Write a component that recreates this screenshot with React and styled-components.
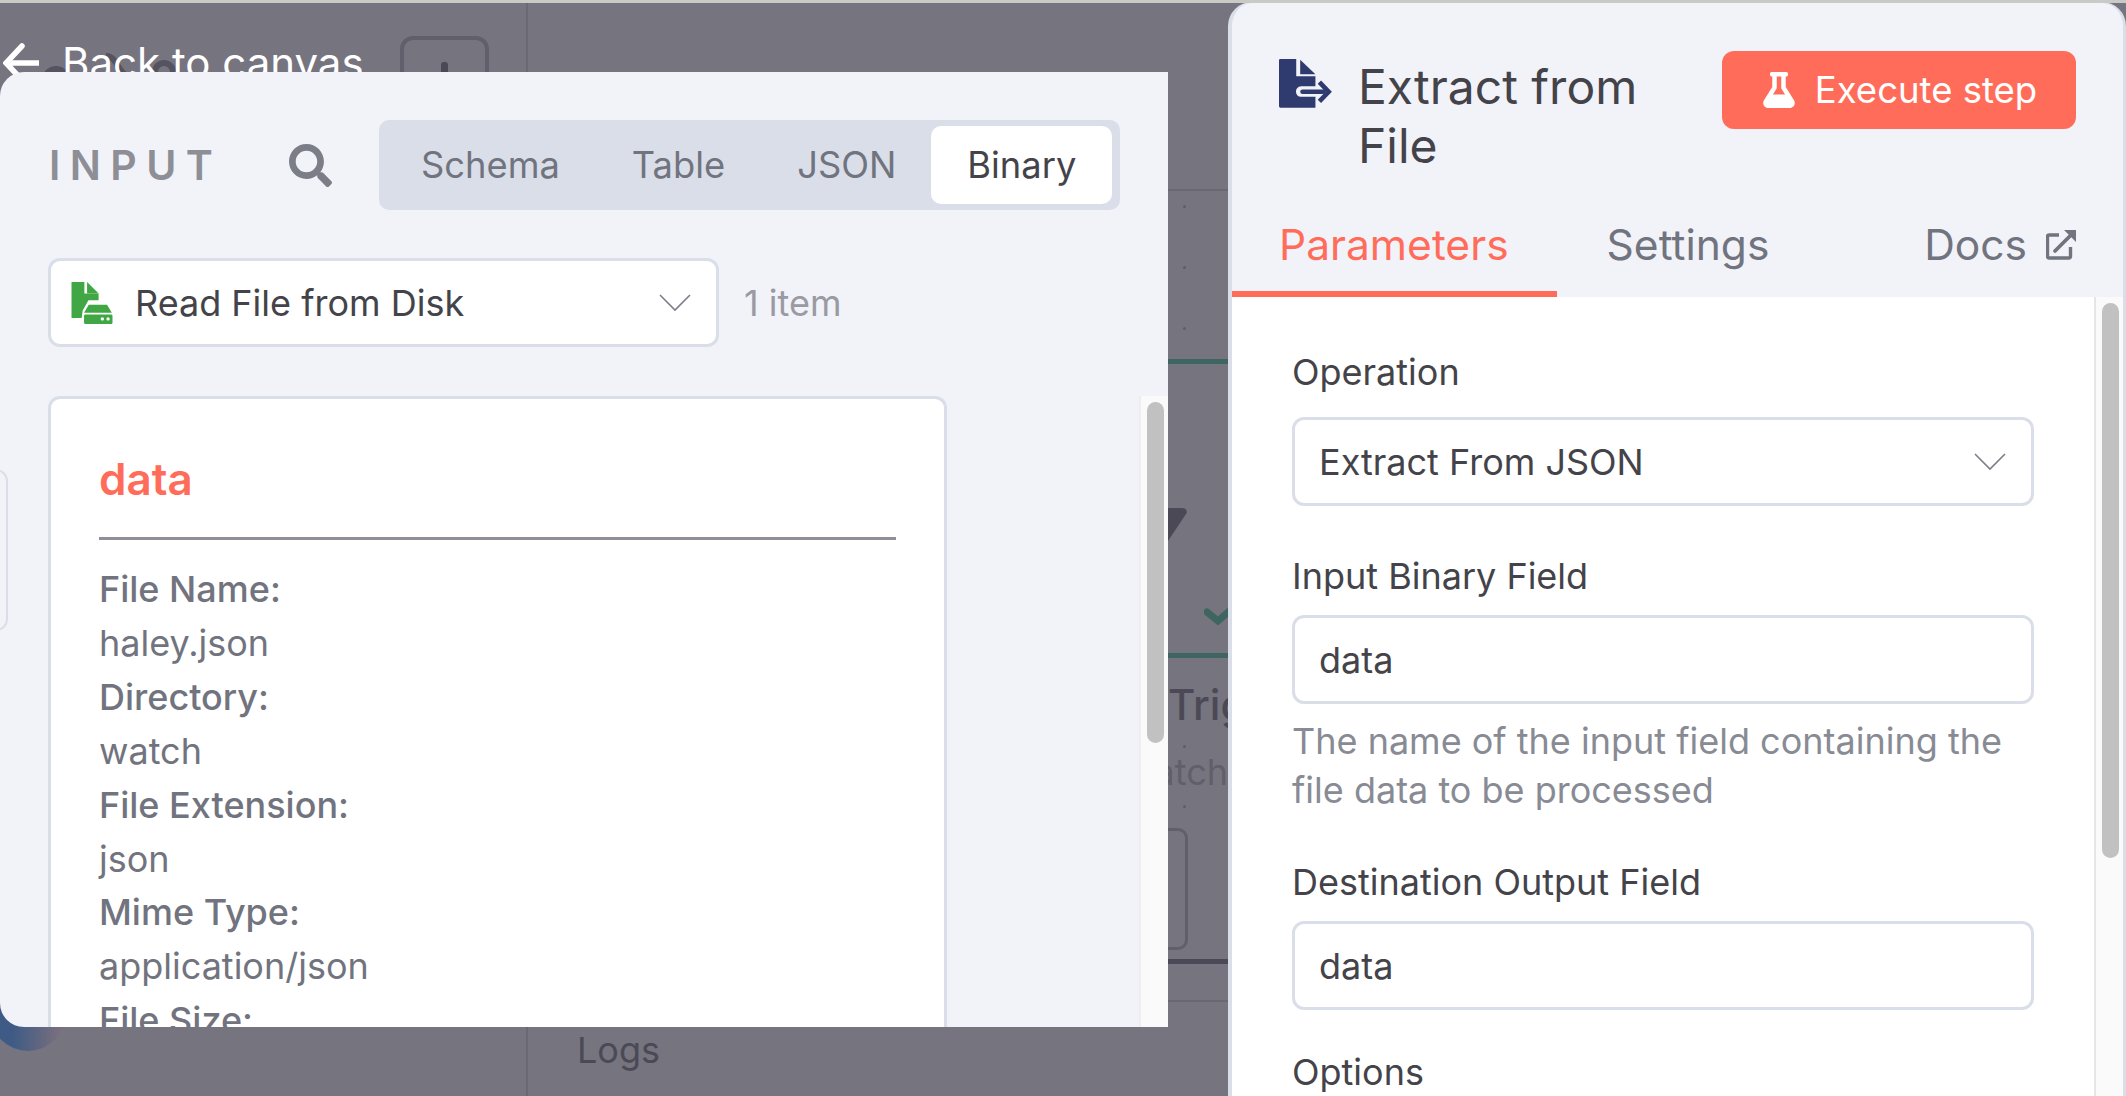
import React from 'react';
import styled, { createGlobalStyle } from 'styled-components';
import { FaSearch, FaFlask } from 'react-icons/fa';

const COLORS = {
  backdrop: '#76747f',
  panel: '#f1f3f9',
  border: '#dadee9',
  coral: '#ff6d5a',
  text: '#434349',
  muted: '#71747e',
  light: '#9a9aa3',
  hint: '#888b94',
  canvasDark: '#4b4955',
  canvasLine: '#6a6873',
  green: '#3f6561',
};

const GlobalStyle = createGlobalStyle`
  html, body {
    margin: 0;
    padding: 0;
    background: ${COLORS.backdrop};
  }
  * {
    box-sizing: border-box;
  }
`;

const Page = styled.div`
  position: relative;
  width: 2126px;
  height: 1096px;
  overflow: hidden;
  display: flex;
  align-items: flex-start;
  background: ${COLORS.backdrop};
  font-family: Inter, "Liberation Sans", sans-serif;
  color: ${COLORS.text};
`;

/* the dimmed canvas behind the two panels */
const Canvas = styled.div`
  position: absolute;
  inset: 0;
`;

const TopEdge = styled.div`
  position: absolute;
  top: 0;
  left: 0;
  right: 0;
  height: 3px;
  z-index: 2;
  background: #c9cac6;
`;

const VLine = styled.div`
  position: absolute;
  left: 526px;
  top: 0;
  bottom: 0;
  width: 2px;
  background: ${COLORS.canvasLine};
`;

const HLine = styled.div`
  position: absolute;
  left: ${p => p.$left || 527}px;
  right: 898px;
  top: ${p => p.$top}px;
  height: ${p => p.$h || 2}px;
  background: ${p => p.$color || COLORS.canvasLine};
`;

const BackLink = styled.div`
  position: absolute;
  left: 3px;
  top: 38px;
  display: flex;
  align-items: center;
  gap: 23px;
  color: #fff;
  font-size: 42px;
  line-height: 50px;
  white-space: nowrap;
`;

const NodeLogo = styled.svg`
  position: absolute;
  left: 36px;
  top: 50px;
`;

const PlusButton = styled.div`
  position: absolute;
  left: 400px;
  top: 36px;
  width: 89px;
  height: 80px;
  border: 4px solid #615f6b;
  border-radius: 13px;
  &::after {
    content: '';
    position: absolute;
    left: 37px;
    top: 22px;
    width: 7px;
    height: 30px;
    border-radius: 3px;
    background: ${COLORS.canvasDark};
  }
`;

const Dot = styled.div`
  position: absolute;
  left: ${p => p.$x}px;
  top: ${p => p.$y}px;
  width: 3px;
  height: 3px;
  border-radius: 50%;
  background: #5f5d68;
`;

const CanvasShape = styled.svg`
  position: absolute;
  left: ${p => p.$x}px;
  top: ${p => p.$y}px;
`;

const TriggerName = styled.div`
  position: absolute;
  left: 1168px;
  width: 60px;
  top: 676px;
  overflow: hidden;
  font-size: 42px;
  line-height: 58px;
  font-weight: 500;
  white-space: nowrap;
  color: ${COLORS.canvasDark};
`;

const TriggerSub = styled.div`
  position: absolute;
  left: 1168px;
  width: 60px;
  top: 750px;
  overflow: hidden;
  font-size: 36px;
  line-height: 44px;
  white-space: nowrap;
  direction: rtl;
  color: #625f6b;
`;

const NodeBox = styled.div`
  position: absolute;
  left: 1100px;
  top: 828px;
  width: 88px;
  height: 122px;
  border: 3px solid #615f6b;
  border-radius: 10px;
`;

const Avatar = styled.div`
  position: absolute;
  left: -10px;
  top: 975px;
  width: 76px;
  height: 76px;
  border-radius: 50%;
  background: linear-gradient(90deg, #3f5b85 30%, #7a6f7e 92%);
`;

const LogsLabel = styled.div`
  position: absolute;
  left: 577px;
  top: 1028px;
  font-size: 36px;
  line-height: 44px;
  color: ${COLORS.canvasDark};
`;

/* input panel, left */
const InputPanel = styled.section`
  position: relative;
  z-index: 1;
  flex: none;
  width: 1168px;
  height: 955px;
  margin-top: 72px;
  margin-right: 60px;
  overflow: hidden;
  display: flex;
  flex-direction: column;
  background: ${COLORS.panel};
  border-radius: 24px 0 0 24px;
`;

const InputHeader = styled.div`
  display: flex;
  align-items: center;
  height: 90px;
  margin-top: 48px;
  padding-left: 49px;
`;

const InputTitle = styled.div`
  width: 240px;
  font-size: 41px;
  font-weight: 600;
  letter-spacing: 0.23em;
  color: #8e8e96;
`;

const SearchIcon = styled(FaSearch)`
  width: 43px;
  height: 43px;
  color: #7b7e87;
  margin-right: 47px;
`;

const RunTabs = styled.div`
  display: flex;
  align-items: center;
  width: 741px;
  height: 90px;
  padding: 6px 6px 6px 0;
  border-radius: 10px;
  background: ${COLORS.border};
`;

const RunTab = styled.div`
  height: 78px;
  display: flex;
  align-items: center;
  margin-left: ${p => p.$offset}px;
  padding: ${p => (p.$active ? '0 36px' : '0')};
  border-radius: 10px;
  font-size: 36.3px;
  background: ${p => (p.$active ? '#fff' : 'transparent')};
  color: ${p => (p.$active ? COLORS.text : COLORS.muted)};
`;

const SourceRow = styled.div`
  display: flex;
  align-items: center;
  margin-top: 48px;
  padding-left: 48px;
`;

const SourceSelect = styled.div`
  display: flex;
  align-items: center;
  width: 671px;
  height: 89px;
  padding: 0 25px 0 20px;
  border: 3px solid ${COLORS.border};
  border-radius: 12px;
  background: #fff;
  font-size: 36px;
`;

const SourceName = styled.span`
  flex: 1;
  margin-left: 22px;
`;

const ItemCount = styled.div`
  margin-left: 25px;
  font-size: 36px;
  color: ${COLORS.light};
`;

const InputBody = styled.div`
  flex: 1;
  min-height: 0;
  display: flex;
  justify-content: space-between;
  margin-top: 49px;
  padding-left: 48px;
`;

const BinaryCard = styled.div`
  width: 899px;
  height: 720px;
  padding: 56px 48px 0 48px;
  border: 3px solid ${COLORS.border};
  border-bottom: 0;
  border-radius: 12px 12px 0 0;
  background: #fff;
`;

const BinaryName = styled.div`
  padding-bottom: 34px;
  border-bottom: 3px solid #8f8f97;
  font-size: 44px;
  line-height: 48px;
  font-weight: 600;
  color: ${COLORS.coral};
`;

const MetaList = styled.div`
  margin-top: 23px;
`;

const MetaLine = styled.div`
  font-size: 36px;
  line-height: 53.9px;
  color: ${COLORS.muted};
  font-weight: ${p => (p.$label ? 500 : 400)};
`;

const SideTab = styled.div`
  position: absolute;
  left: -20px;
  top: 397px;
  width: 28px;
  height: 162px;
  border: 2px solid ${COLORS.border};
  border-radius: 12px;
`;

const ScrollTrack = styled.div`
  flex: none;
  width: 29px;
  padding: 6px 0 0 6px;
  background: #fafafa;
  border-left: 2px solid ${p => p.$line || '#eeeeee'};
`;

const ScrollThumb = styled.div`
  width: ${p => p.$w}px;
  height: ${p => p.$h}px;
  border-radius: 9px;
  background: #c1c1c1;
`;

/* node settings panel, right */
const SettingsPanel = styled.section`
  position: relative;
  z-index: 1;
  flex: 1;
  height: 1100px;
  margin-top: 2px;
  display: flex;
  flex-direction: column;
  overflow: hidden;
  background: ${COLORS.panel};
  border: 4px solid ${COLORS.border};
  border-right-width: 3px;
  border-top-width: 1px;
  border-radius: 24px 24px 0 0;
`;

const SettingsHeader = styled.div`
  flex: none;
  display: flex;
  align-items: flex-start;
  height: 193px;
  padding: 48px 47px 0 47px;
`;

const TitleGroup = styled.div`
  display: flex;
  flex: 1;
  gap: 26px;
  & > svg {
    margin-top: 8px;
  }
`;

const NodeTitle = styled.h1`
  width: 320px;
  margin: 6px 0 0;
  font-size: 48px;
  line-height: 59px;
  font-weight: 400;
  color: ${COLORS.text};
`;

const ExecuteButton = styled.button`
  display: flex;
  align-items: center;
  justify-content: center;
  gap: 18px;
  width: 354px;
  height: 78px;
  border: 0;
  border-radius: 12px;
  background: ${COLORS.coral};
  color: #fff;
  font-family: inherit;
  font-size: 36.5px;
`;

const SettingsTabs = styled.div`
  flex: none;
  display: flex;
  height: 101px;
`;

const SettingsTab = styled.div`
  display: flex;
  align-items: center;
  gap: 19px;
  padding: 2px 48px 0 50px;
  margin-left: ${p => (p.$right ? 'auto' : '0')};
  font-size: 42.5px;
  color: ${p => (p.$active ? COLORS.coral : COLORS.muted)};
  border-bottom: 6px solid ${p => (p.$active ? COLORS.coral : 'transparent')};
  &:first-child {
    padding-left: 47px;
  }
  &:last-child {
    padding-right: 47px;
  }
`;

const SettingsBody = styled.div`
  flex: 1;
  min-height: 0;
  display: flex;
  background: #fff;
`;

const Form = styled.div`
  flex: 1;
  padding: 53px 60px 0;
`;

const FieldLabel = styled.div`
  margin-top: ${p => p.$top || 0}px;
  margin-bottom: ${p => p.$bottom || 0}px;
  font-size: 36px;
  line-height: 44px;
  color: ${COLORS.text};
`;

const FieldBox = styled.div`
  display: flex;
  align-items: center;
  justify-content: space-between;
  height: 89px;
  padding: 0 25px 0 24px;
  border: 3px solid ${COLORS.border};
  border-radius: 12px;
  background: #fff;
  font-size: 36px;
`;

const FieldHint = styled.div`
  margin-top: 13px;
  font-size: 36px;
  line-height: 48.5px;
  color: ${COLORS.hint};
`;

const Chevron = () => (
  <svg width="32" height="18" viewBox="0 0 32 18" fill="none">
    <polyline points="1,1 16,16 31,1" stroke="#7d7f88" strokeWidth="1.6" />
  </svg>
);

const DiskFileIcon = () => (
  <svg width="42" height="42" viewBox="67 66 121 124">
    <path fill="#41a745" d="M67 66h38v34h42v20h-30l-17 30-3 22H67z" />
    <path fill="#41a745" d="M113 66l34 34h-34z" />
    <path fill="#41a745" d="M118 133h54l14 24h-82z" />
    <path fill="#41a745" fillRule="evenodd" d="M108 162h76a4 4 0 0 1 4 4v20a4 4 0 0 1-4 4h-76a4 4 0 0 1-4-4v-20a4 4 0 0 1 4-4zm50 8a5 5 0 1 0 0 10 5 5 0 0 0 0-10zm17 0a5 5 0 1 0 0 10 5 5 0 0 0 0-10z" />
  </svg>
);

const ExtractFileIcon = () => (
  <svg width="53" height="49" viewBox="58 58 160 148">
    <path fill="#2f3b6f" d="M62 58h48v52h58v30h-43c-21 0-21 32 0 32h43v33H62a4 4 0 0 1-4-4V62a4 4 0 0 1 4-4z" />
    <path fill="#2f3b6f" d="M122 60l46 44h-46z" />
    <rect x="122" y="150" width="76" height="14" rx="7" fill="#2f3b6f" />
    <polyline points="180,128 208,157 180,186" fill="none" stroke="#2f3b6f" strokeWidth="14" />
  </svg>
);

const OpenLinkIcon = () => (
  <svg width="30" height="30" viewBox="0 0 30 30" fill="none">
    <path d="M13 5H3a1.5 1.5 0 0 0-1.5 1.5v20A1.5 1.5 0 0 0 3 28h20a1.5 1.5 0 0 0 1.5-1.5V17" stroke="#71747e" strokeWidth="3.4" />
    <path d="M9 21L24 6" stroke="#71747e" strokeWidth="3.8" strokeLinecap="round" />
    <path d="M18 0h12v12z" fill="#71747e" />
  </svg>
);

const BackArrow = () => (
  <svg width="36" height="40" viewBox="0 0 36 40" fill="none">
    <path d="M19 3L3 20l16 17M4 20h31" stroke="#fff" strokeWidth="5.5" strokeLinecap="round" />
  </svg>
);

const metaLines = [
  ['File Name:', true],
  ['haley.json'],
  ['Directory:', true],
  ['watch'],
  ['File Extension:', true],
  ['json'],
  ['Mime Type:', true],
  ['application/json'],
  ['File Size:', true],
];

const App = () => (
  <Page>
    <GlobalStyle />
    <TopEdge />
    <Canvas>
      <VLine />
      <HLine $top={189} $left={1168} />
      <HLine $top={359} $left={1168} $h={5} $color={COLORS.green} />
      <HLine $top={653} $left={1168} $h={5} $color={COLORS.green} />
      <HLine $top={959} $left={1100} $h={5} $color={COLORS.canvasDark} />
      <HLine $top={1000} />
      <Dot $x={1183} $y={205} />
      <Dot $x={1183} $y={266} />
      <Dot $x={1183} $y={327} />
      <Dot $x={1183} $y={745} />
      <Dot $x={1183} $y={805} />
      <NodeLogo width="140" height="30" viewBox="0 0 140 30" fill="none">
        <circle cx="20" cy="30" r="11" stroke="#55535f" strokeWidth="6" />
        <circle cx="128" cy="22" r="9" stroke="#55535f" strokeWidth="6" />
        <path d="M70 6c12 0 12 20 24 20" stroke="#55535f" strokeWidth="6" />
      </NodeLogo>
      <BackLink>
        <BackArrow />
        <span>Back to canvas</span>
      </BackLink>
      <PlusButton />
      <CanvasShape $x={1150} $y={508} width="38" height="36" viewBox="0 0 38 36">
        <path d="M0 0h32c4 0 6 3 4 6L18 33c-3 4-18 3-18 0z" fill={COLORS.canvasDark} />
      </CanvasShape>
      <CanvasShape $x={1204} $y={604} width="30" height="28" viewBox="0 0 30 28" fill="none">
        <path d="M3 8l11 9L30 3" stroke={COLORS.green} strokeWidth="7" strokeLinecap="round" />
      </CanvasShape>
      <TriggerName>Trigger</TriggerName>
      <TriggerSub>atch</TriggerSub>
      <NodeBox />
      <Avatar />
      <LogsLabel>Logs</LogsLabel>
    </Canvas>

    <InputPanel>
      <InputHeader>
        <InputTitle>INPUT</InputTitle>
        <SearchIcon />
        <RunTabs>
          <RunTab $offset={42}>Schema</RunTab>
          <RunTab $offset={72}>Table</RunTab>
          <RunTab $offset={72}>JSON</RunTab>
          <RunTab $offset={35} $active>Binary</RunTab>
        </RunTabs>
      </InputHeader>
      <SourceRow>
        <SourceSelect>
          <DiskFileIcon />
          <SourceName>Read File from Disk</SourceName>
          <Chevron />
        </SourceSelect>
        <ItemCount>1 item</ItemCount>
      </SourceRow>
      <InputBody>
        <BinaryCard>
          <BinaryName>data</BinaryName>
          <MetaList>
            {metaLines.map(([text, label]) => (
              <MetaLine key={text} $label={label}>{text}</MetaLine>
            ))}
          </MetaList>
        </BinaryCard>
        <ScrollTrack>
          <ScrollThumb $w={17} $h={341} />
        </ScrollTrack>
      </InputBody>
      <SideTab />
    </InputPanel>

    <SettingsPanel>
      <SettingsHeader>
        <TitleGroup>
          <ExtractFileIcon />
          <NodeTitle>Extract from File</NodeTitle>
        </TitleGroup>
        <ExecuteButton>
          <FaFlask size={36} />
          Execute step
        </ExecuteButton>
      </SettingsHeader>
      <SettingsTabs>
        <SettingsTab $active>Parameters</SettingsTab>
        <SettingsTab>Settings</SettingsTab>
        <SettingsTab $right>Docs <OpenLinkIcon /></SettingsTab>
      </SettingsTabs>
      <SettingsBody>
        <Form>
          <FieldLabel $bottom={23}>Operation</FieldLabel>
          <FieldBox>Extract From JSON <Chevron /></FieldBox>
          <FieldLabel $top={48} $bottom={17}>Input Binary Field</FieldLabel>
          <FieldBox>data</FieldBox>
          <FieldHint>The name of the input field containing the file data to be processed</FieldHint>
          <FieldLabel $top={46} $bottom={17}>Destination Output Field</FieldLabel>
          <FieldBox>data</FieldBox>
          <FieldLabel $top={40}>Options</FieldLabel>
        </Form>
        <ScrollTrack $line="#e6e6e6">
          <ScrollThumb $w={17} $h={555} />
        </ScrollTrack>
      </SettingsBody>
    </SettingsPanel>
  </Page>
);

export default App;
